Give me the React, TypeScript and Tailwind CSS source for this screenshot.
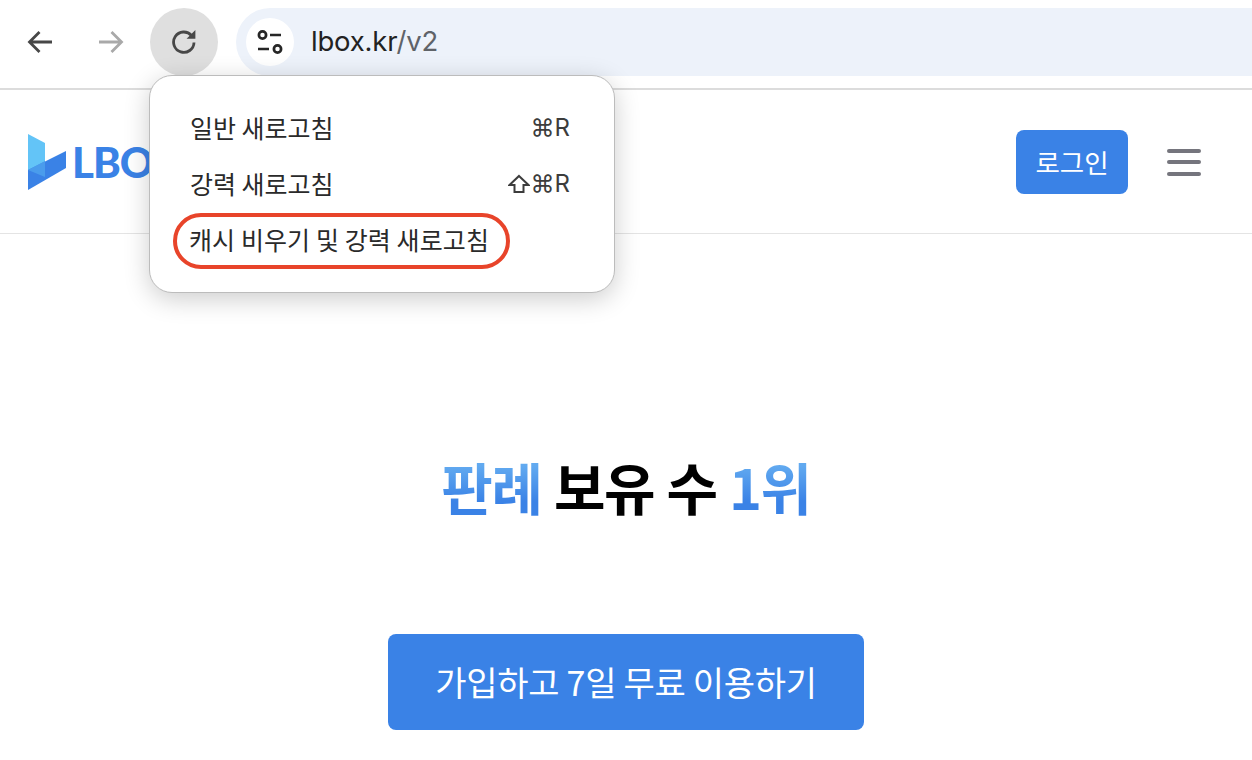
const KR = "font-['Noto_Sans_CJK_KR','Noto_Sans',sans-serif]";

function BackIcon({ className }: { className: string }) {
  return (
    <svg width="26" height="24" viewBox="0 0 26 24" fill="none" className={className}>
      <path d="M25 12H3M12.5 2 2.5 12l10 10" stroke="currentColor" strokeWidth="2.8" />
    </svg>
  );
}

function ReloadIcon() {
  return (
    <svg width="26" height="26" viewBox="0 0 26 26" fill="none" className="text-[#474747] -mt-[2px]">
      <path d="M20.5 7.5A10.2 10.2 0 1 0 23 14.5" stroke="currentColor" strokeWidth="2.8" />
      <path d="M24.4 2V10.8H15.6Z" fill="currentColor" />
    </svg>
  );
}

function TuneIcon() {
  return (
    <svg width="26" height="26" viewBox="0 0 26 26" fill="none" className="text-[#262626]">
      <circle cx="5.5" cy="6" r="3.6" stroke="currentColor" strokeWidth="2.7" />
      <path d="M13 6h11M1 20h11" stroke="currentColor" strokeWidth="2.7" />
      <circle cx="20.5" cy="20" r="3.6" stroke="currentColor" strokeWidth="2.7" />
    </svg>
  );
}

function Logo() {
  return (
    <svg width="38" height="56" viewBox="0 0 38 56" fill="none">
      <path d="M0 0 17 9V43L0 36Z" fill="#63c4f7" />
      <path d="M0 36 38 17V34L0 56Z" fill="#3a82e6" />
      <path d="M0 36 17 27V43Z" fill="#4a9cec" />
    </svg>
  );
}

function ShiftIcon() {
  return (
    <svg width="22" height="20" viewBox="0 0 22 20" fill="none" className="text-[#3c3c3c]">
      <path d="M11 2 20.5 11H15.5V18H6.5V11H1.5Z" stroke="currentColor" strokeWidth="2" strokeLinejoin="miter" />
    </svg>
  );
}

function ReloadMenu() {
  return (
    <div className={`absolute left-[149px] top-[75px] w-[466px] h-[218px] bg-white rounded-[23px] border border-[#bcbcbc] shadow-[0_6px_26px_rgba(0,0,0,0.2)] pl-[24px] pr-[44px] pt-[25px] text-[25px] text-[#2a2a2a] ${KR}`}>
      <div className="flex justify-between items-center h-[56px] pl-[16px] pb-[2px]">
        <span>일반 새로고침</span>
        <span className="font-['Inter',sans-serif] text-[24px] text-[#3c3c3c]">⌘R</span>
      </div>
      <div className="flex justify-between items-center h-[56px] pl-[16px] pb-[2px]">
        <span>강력 새로고침</span>
        <span className="flex items-center gap-[1px] -ml-[2px] font-['Inter',sans-serif] text-[24px] text-[#3c3c3c]">
          <ShiftIcon />⌘R
        </span>
      </div>
      <div className="flex items-center">
        <span className="inline-flex items-center h-[56px] pl-[12px] pr-[17px] pb-[3px] -ml-[1px] border-[4px] border-[#e8442a] rounded-[28px] tracking-[0.1px]">
          캐시 비우기 및 강력 새로고침
        </span>
      </div>
    </div>
  );
}

export default function App() {
  return (
    <div className="relative w-[1252px] h-[760px] overflow-hidden bg-white">
      {/* browser toolbar */}
      <div className="flex items-center h-[90px] pb-[4px] border-b-2 border-[#dcdcdc] pl-[27px]">
        <BackIcon className="text-[#474747]" />
        <BackIcon className="text-[#a9a9a9] rotate-180 ml-[45px]" />
        <div className="flex items-center justify-center w-[68px] h-[68px] ml-[26px] rounded-full bg-[#dfdfdf]">
          <ReloadIcon />
        </div>
        <div className="flex items-center flex-1 h-[68px] ml-[18px] pl-[10px] rounded-l-full bg-[#edf2fa]">
          <div className="flex items-center justify-center w-[48px] h-[48px] rounded-full bg-white">
            <TuneIcon />
          </div>
          <span className="ml-[17px] text-[27.5px] font-['Inter',sans-serif] text-[#222] tracking-[-0.2px]">
            lbox.kr<span className="text-[#5f6368]">/v2</span>
          </span>
        </div>
      </div>

      {/* site header */}
      <div className="flex items-center justify-between h-[144px] border-b border-[#e4e4e4] pl-[28px] pr-[51px]">
        <div className="flex items-center gap-[6px]">
          <Logo />
          <span className="text-[42px] font-black leading-none tracking-[-1px] font-['Lato',sans-serif] text-[#3a82e6]">LBOX</span>
        </div>
        <div className="flex items-center gap-[39px]">
          <button className={`w-[112px] h-[64px] rounded-[8px] bg-[#3a82e6] text-white text-[26.5px] ${KR}`}>로그인</button>
          <div className="flex flex-col gap-[7.5px] w-[34px] mt-[1px]">
            <div className="h-[4px] rounded-full bg-[#75757d]" />
            <div className="h-[4px] rounded-full bg-[#75757d]" />
            <div className="h-[4px] rounded-full bg-[#75757d]" />
          </div>
        </div>
      </div>

      {/* hero */}
      <div className="flex flex-col items-center pt-[212px]">
        <h1 className={`text-[56px] font-bold leading-[80px] tracking-[-1.4px] [word-spacing:1px] text-black ${KR}`}>
          <span className="bg-gradient-to-b from-[#62aaf0] from-[25%] to-[#3a82e6] to-[70%] bg-clip-text text-transparent">판례</span> 보유 수{" "}
          <span className="bg-gradient-to-b from-[#62aaf0] from-[25%] to-[#3a82e6] to-[70%] bg-clip-text text-transparent">1위</span>
        </h1>
        <button className={`w-[476px] h-[96px] mt-[108px] pb-[2px] rounded-[8px] bg-[#3a82e6] text-white text-[34px] tracking-[-0.3px] ${KR}`}>
          가입하고 7일 무료 이용하기
        </button>
      </div>

      <ReloadMenu />
    </div>
  );
}
